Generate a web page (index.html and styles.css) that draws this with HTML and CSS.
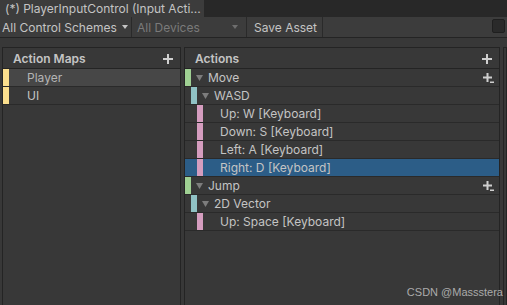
FILE: index.html
```html
<!DOCTYPE html>
<html lang="en">
<head>
    <meta charset="UTF-8">
    <meta name="viewport" content="width=device-width, initial-scale=1.0">
    <title>PlayerInputControl (Input Actions)</title>
    <link rel="stylesheet" href="styles.css">
</head>
<body>
    <div class="tabbar">
        <div class="tab">(*) PlayerInputControl (Input Acti...</div>
    </div>

    <div class="toolbar">
        <div class="tb-item schemes">All Control Schemes <span class="caret"></span></div>
        <div class="tb-item devices">All Devices <span class="caret"></span></div>
        <div class="tb-item save">Save Asset</div>
        <div class="tb-spacer"></div>
        <div class="tb-check"></div>
    </div>

    <main class="workspace">
        <section class="panel maps">
            <div class="panel-header">
                <span>Action Maps</span>
                <svg class="plus" width="10" height="10" viewBox="0 0 10 10"><rect x="0" y="4" width="10" height="2"/><rect x="4" y="0" width="2" height="10"/></svg>
            </div>
            <div class="row current"><span class="bar map"></span><span class="gap-map"></span><span class="label">Player</span></div>
            <div class="row"><span class="bar map"></span><span class="gap-map"></span><span class="label">UI</span></div>
        </section>

        <section class="panel actions">
            <div class="panel-header">
                <span>Actions</span>
                <svg class="plus" width="10" height="10" viewBox="0 0 10 10"><rect x="0" y="4" width="10" height="2"/><rect x="4" y="0" width="2" height="10"/></svg>
            </div>

            <div class="row">
                <span class="bar action"></span>
                <span class="twisty"><svg width="7" height="6" viewBox="0 0 7 6"><polygon points="0,0 7,0 3.5,6"/></svg></span>
                <span class="label">Move</span>
                <svg class="row-add" width="12" height="11" viewBox="0 0 12 11"><rect x="0" y="3.5" width="9" height="2"/><rect x="3.5" y="0" width="2" height="9"/><rect x="7" y="8.5" width="4" height="1.5"/></svg>
            </div>
            <div class="row lvl-1">
                <span class="bar composite"></span>
                <span class="twisty"><svg width="7" height="6" viewBox="0 0 7 6"><polygon points="0,0 7,0 3.5,6"/></svg></span>
                <span class="label">WASD</span>
            </div>
            <div class="row lvl-2"><span class="bar binding"></span><span class="twisty"></span><span class="label">Up: W [Keyboard]</span></div>
            <div class="row lvl-2"><span class="bar binding"></span><span class="twisty"></span><span class="label">Down: S [Keyboard]</span></div>
            <div class="row lvl-2"><span class="bar binding"></span><span class="twisty"></span><span class="label">Left: A [Keyboard]</span></div>
            <div class="row lvl-2 selected"><span class="bar binding"></span><span class="twisty"></span><span class="label">Right: D [Keyboard]</span></div>

            <div class="row">
                <span class="bar action"></span>
                <span class="twisty"><svg width="7" height="6" viewBox="0 0 7 6"><polygon points="0,0 7,0 3.5,6"/></svg></span>
                <span class="label">Jump</span>
                <svg class="row-add" width="12" height="11" viewBox="0 0 12 11"><rect x="0" y="3.5" width="9" height="2"/><rect x="3.5" y="0" width="2" height="9"/><rect x="7" y="8.5" width="4" height="1.5"/></svg>
            </div>
            <div class="row lvl-1">
                <span class="bar composite"></span>
                <span class="twisty"><svg width="7" height="6" viewBox="0 0 7 6"><polygon points="0,0 7,0 3.5,6"/></svg></span>
                <span class="label">2D Vector</span>
            </div>
            <div class="row lvl-2"><span class="bar binding"></span><span class="twisty"></span><span class="label">Up: Space [Keyboard]</span></div>
        </section>

        <section class="panel props"></section>
    </main>

    <div class="watermark">CSDN @Massstera</div>
</body>
</html>
```

FILE: styles.css
```css
:root {
    --bg: #383838;
    --bar-bg: #3c3c3c;
    --line: #242424;
    --text: #c4c4c4;
    --map-color: #fbdf8e;
    --action-color: #9fd093;
    --composite-color: #90c2c5;
    --binding-color: #d59dbf;
    --selected: #2c5d87;
}

* {
    margin: 0;
    padding: 0;
    box-sizing: border-box;
}

html, body {
    width: 507px;
    height: 305px;
    overflow: hidden;
}

body {
    position: relative;
    font-family: Inter, "Noto Sans", sans-serif;
    font-size: 12px;
    color: var(--text);
    background-color: var(--bg);
}

/* window tab */
.tabbar {
    display: flex;
    height: 17px;
    background-color: #282828;
}

.tab {
    width: 204px;
    padding-left: 5px;
    line-height: 17px;
    white-space: nowrap;
    overflow: hidden;
    background-color: var(--bar-bg);
}

/* toolbar */
.toolbar {
    display: flex;
    height: 21px;
    background-color: var(--bar-bg);
    border-bottom: 1px solid var(--line);
}

.tb-item {
    display: flex;
    align-items: center;
    white-space: nowrap;
    border-right: 1px solid #2a2a2a;
}

.schemes {
    width: 132px;
    padding-left: 2px;
}

.schemes .caret {
    margin-left: 5px;
}

.devices {
    width: 115px;
    padding-left: 5px;
    color: #7a7a7a;
}

.devices .caret {
    margin-left: auto;
    margin-right: 8px;
    border-top-color: #6e6e6e;
}

.save {
    width: 76px;
    padding-left: 7px;
}

.caret {
    width: 0;
    height: 0;
    border-left: 3.5px solid transparent;
    border-right: 3.5px solid transparent;
    border-top: 4px solid var(--text);
}

.tb-spacer {
    flex: 1;
}

.tb-check {
    width: 13px;
    height: 14px;
    margin: 2px 2px 0 0;
    border: 1px solid #1f1f1f;
    border-radius: 2px;
    background-color: #2a2a2a;
}

/* panels */
.workspace {
    display: flex;
    gap: 3px;
    padding: 9px 0 0 2px;
    height: 267px;
    overflow: hidden;
}

.panel {
    height: 280px;
    flex-shrink: 0;
    border: 1px solid var(--line);
}

.maps {
    width: 179px;
}

.actions {
    width: 316px;
}

.props {
    flex: 1;
}

.panel-header {
    display: flex;
    align-items: center;
    justify-content: space-between;
    height: 21px;
    padding: 0 7px 0 10px;
    font-weight: 600;
    border-bottom: 1px solid var(--line);
}

.plus {
    fill: #cfcfcf;
    margin-top: 1px;
}

/* tree rows */
.row {
    display: flex;
    align-items: stretch;
    height: 18px;
    line-height: 17px;
    white-space: nowrap;
    border-bottom: 1px solid #2a2a2a;
}

.row.current {
    background-color: #474747;
}

.row.current .label {
    color: #b4b4b4;
}

.row.selected {
    background-color: var(--selected);
}

.lvl-1 {
    padding-left: 6px;
}

.lvl-2 {
    padding-left: 12px;
}

.bar {
    width: 6px;
    flex-shrink: 0;
}

.bar.map { background-color: var(--map-color); }
.bar.action { background-color: var(--action-color); }
.bar.composite { background-color: var(--composite-color); }
.bar.binding { background-color: var(--binding-color); }

.gap-map {
    width: 18px;
}

.twisty {
    display: flex;
    align-items: center;
    width: 17px;
    padding-left: 5px;
    fill: #7d7d7d;
}

.row-add {
    margin: 4px 4px 0 auto;
    fill: #cfcfcf;
}

.watermark {
    position: absolute;
    right: 4px;
    bottom: 7px;
    font-family: "Liberation Sans", Arial, sans-serif;
    font-size: 11px;
    color: #ababab;
}
```
